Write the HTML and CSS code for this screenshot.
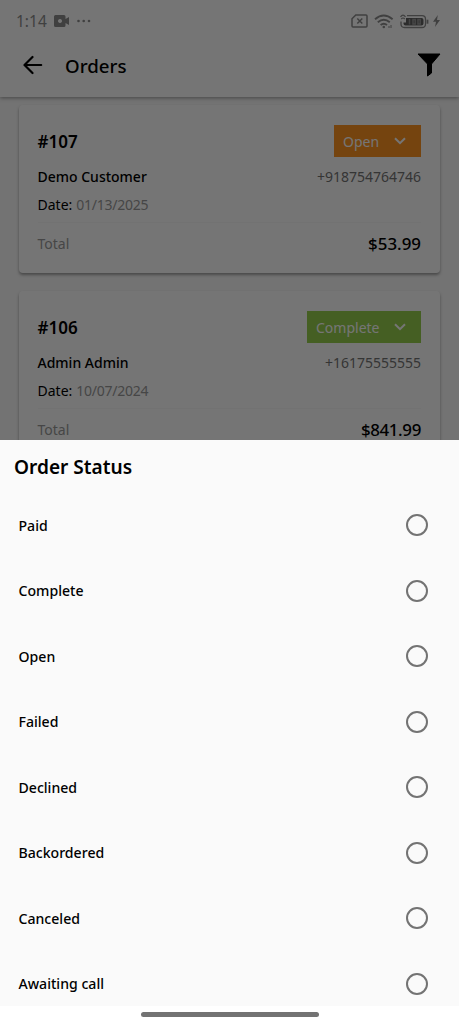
FILE: index.html
```html
<!DOCTYPE html>
<html lang="en">
<head>
<meta charset="utf-8">
<title>Orders</title>
<link rel="stylesheet" href="styles.css">
</head>
<body>
<div class="screen">
  <main class="app">
    <header class="top">
      <div class="status">
        <span class="clock">1:14</span>
        <svg class="cam" width="16" height="12" viewBox="0 0 16 12"><path fill="currentColor" fill-rule="evenodd" d="M1.500 0h8.500a1.500 1.500 0 0 1 1.500 1.500v2.500l3.500-2v8l-3.500-2v2.500a1.500 1.500 0 0 1-1.500 1.500h-8.500a1.500 1.500 0 0 1-1.500-1.500v-9a1.500 1.500 0 0 1 1.500-1.500zM6 4a2 2 0 1 0 .01 0z"/></svg>
        <svg class="dots" width="14" height="4" viewBox="0 0 14 4" fill="currentColor"><circle cx="1.500" cy="2" r="1.300"/><circle cx="6.700" cy="2" r="1.300"/><circle cx="12" cy="2" r="1.300"/></svg>
        <span class="grow"></span>
        <svg class="sim" width="17" height="14" viewBox="0 0 17 14" fill="none" stroke="currentColor" stroke-width="1.500"><path d="M4.800 1h10.200q1 0 1 1v10q0 1-1 1h-13q-1 0-1-1v-7.200z"/><path d="M6.300 4.500l5 5m0-5l-5 5"/></svg>
        <svg class="wifi" width="20" height="15" viewBox="0 0 20 15" fill="none" stroke="currentColor" stroke-width="1.900"><path d="M1 5.200q8.700-7.400 17.600 0M3.800 8.200q6-5 12 0M6.600 11q3.200-2.600 6.400 0"/><circle cx="9.800" cy="13" r="1.300" fill="currentColor" stroke="none"/><path d="M15 12v2m2-3v3" stroke-width="1"/></svg>
        <svg class="battery" width="29" height="15" viewBox="0 0 29 15" fill="none" stroke="currentColor"><path stroke-width="1.300" d="M7 1.700h15q3.500 0 3.500 3.500v4.800q0 3.500-3.500 3.500h-17.500q-3.500 0-3.500-3.500v-2.500"/><path stroke-width="1.200" d="M.5 2.800q2.500-3.500 5 0M1.300 5q1.700-2 3.400 0"/><path class="charge" stroke="none" d="M3.500 8.500h2.500v-4.500h15.500q2 0 2 2v3.500q0 2-2 2h-16q-2 0-2-2z"/><path class="level" stroke-width="1.500" d="M9.500 5v5.500M13 5.500h2.200v4.500h-2.200zM18 5.500h2.200v4.500h-2.200z"/><path stroke-width="1.800" d="M27.500 5.700v4"/></svg>
        <svg class="bolt" width="7" height="12" viewBox="0 0 7 12"><path fill="currentColor" d="M4.800 0L0 6.800h3L2 12l5-7h-3z"/></svg>
      </div>
      <div class="bar">
        <svg width="20" height="20" viewBox="0 0 20 20" fill="none" stroke="#000" stroke-width="2.200" stroke-linecap="round" stroke-linejoin="round"><path d="M18.200 10H2M9.500 2L1.500 10l8 8"/></svg>
        <h1 class="title">Orders</h1>
        <svg class="funnel" width="24" height="24" viewBox="0 0 24 24"><path stroke="#000" stroke-linejoin="round" d="M1 1h22L14.500 11v9L10.500 23V11z"/></svg>
      </div>
    </header>
    <section class="orders">
      <article class="card">
        <div class="row head"><strong class="number">#107</strong><span class="chip open"><span>Open</span><svg width="12" height="8" viewBox="0 0 12 8"><path d="M1 1.200l5 5 5-5" fill="none" stroke="#fff" stroke-width="2"/></svg></span></div>
        <div class="row person"><span class="name">Demo Customer</span><span class="phone">+918754764746</span></div>
        <div class="row date"><span>Date:</span><span class="muted day">01/13/2025</span></div>
        <div class="row total"><span class="muted">Total</span><strong class="price">$53.99</strong></div>
      </article>
      <article class="card">
        <div class="row head"><strong class="number">#106</strong><span class="chip complete"><span>Complete</span><svg width="12" height="8" viewBox="0 0 12 8"><path d="M1 1.200l5 5 5-5" fill="none" stroke="#fff" stroke-width="2"/></svg></span></div>
        <div class="row person"><span class="name">Admin Admin</span><span class="phone">+16175555555</span></div>
        <div class="row date"><span>Date:</span><span class="muted day">10/07/2024</span></div>
        <div class="row total"><span class="muted">Total</span><strong class="price large">$841.99</strong></div>
      </article>
    </section>
  </main>
  <div class="scrim"></div>
  <section class="sheet">
    <h2 class="sheet-title">Order Status</h2>
    <div class="option"><span>Paid</span><i class="radio"></i></div>
    <div class="option"><span>Complete</span><i class="radio"></i></div>
    <div class="option"><span>Open</span><i class="radio"></i></div>
    <div class="option"><span>Failed</span><i class="radio"></i></div>
    <div class="option"><span>Declined</span><i class="radio"></i></div>
    <div class="option"><span>Backordered</span><i class="radio"></i></div>
    <div class="option"><span>Canceled</span><i class="radio"></i></div>
    <div class="option"><span>Awaiting call</span><i class="radio"></i></div>
    <div class="nav"><i class="handle"></i></div>
  </section>
</div>
</body>
</html>
```
FILE: styles.css
```css
* { box-sizing: border-box; }
body { margin: 0; font-family: "Noto Sans", sans-serif; color: #000; }
.screen { position: relative; width: 459px; height: 1024px; overflow: hidden; background: #fafafa; }
.app { height: 440px; overflow: hidden; }
.top { position: relative; height: 97px; background: #fff; box-shadow: 0 1px 4px rgba(0,0,0,.4); }
.status { display: flex; align-items: center; height: 42px; padding: 0 19px 0 16px; color: #8c8c8c; }
.clock { width: 38px; font-size: 15.500px; }
.dots { margin-left: 7px; }
.grow { flex: 1; }
.wifi { margin-left: 6px; }
.battery { margin-left: 6px; }
.charge { fill: #606060; }
.level { stroke: #999; }
.bolt { margin-left: 4px; }
.bar { display: flex; align-items: center; height: 47px; padding: 0 18px 0 23px; }
.bar svg { position: relative; top: -1px; }
.title { flex: 1; margin: 0 0 0 22px; font-size: 18.700px; font-weight: 500; }
.orders { display: flex; flex-direction: column; gap: 18px; padding: 8px 19px 0; }
.card { flex: none; height: 168px; padding: 20px 19px 0 18.500px; border-radius: 4px; background: #fff; box-shadow: 0 2px 3px rgba(0,0,0,.36); }
.row { display: flex; align-items: center; justify-content: space-between; white-space: nowrap; }
.head { height: 32px; }
.number { font-size: 17px; font-weight: 600; }
.chip { display: flex; align-items: center; justify-content: space-between; height: 32px; padding: 0 15px 0 9px; color: #fff; font-size: 14px; }
.open { width: 87px; background: #ff9522; }
.complete { width: 114px; background: #97cf4d; }
.person { height: 38px; font-size: 14px; }
.name { font-weight: 500; }
.phone { color: #757575; }
.date { height: 18px; justify-content: flex-start; gap: 4px; font-size: 14px; }
.day { letter-spacing: -.25px; }
.muted { color: #999; }
.total { height: 41px; margin-top: 9px; border-top: 1px solid #f9f9f9; font-size: 14px; }
.price { font-size: 16.900px; font-weight: 500; }
.large { letter-spacing: -.35px; }
.scrim { position: absolute; inset: 0 0 584px; background: rgba(0,0,0,.54); }
.sheet { height: 584px; background: #fafafa; }
.sheet-title { height: 52.500px; margin: 0; padding-left: 14px; font-size: 19.100px; line-height: 54px; font-weight: 600; }
.option { display: flex; align-items: center; justify-content: space-between; height: 65.500px; padding: 0 31px 0 18.500px; font-size: 14.100px; font-weight: 500; }
.radio { width: 22px; height: 22px; border: 2.500px solid #737373; border-radius: 50%; }
.nav { position: relative; display: flex; justify-content: center; height: 18px; margin-top: -10.500px; padding-top: 6px; background: #fff; }
.handle { width: 178px; height: 5px; border-radius: 3px; background: #737373; }
```
